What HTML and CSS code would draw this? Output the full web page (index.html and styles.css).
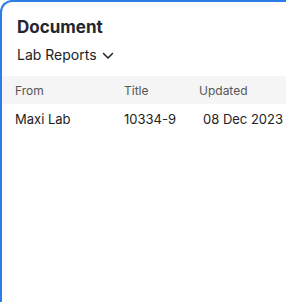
FILE: index.html
```html
<!DOCTYPE html>
<html lang="en">
<head>
    <meta charset="UTF-8">
    <meta name="viewport" content="width=device-width, initial-scale=1.0">
    <title>Document</title>
    <link rel="stylesheet" href="styles.css">
</head>
<body>
    <div class="card">
        <h1 class="title">Document</h1>
        <div class="picker">
            <span>Lab Reports</span>
            <svg class="chevron" width="12" height="8" viewBox="0 0 12 8"><path d="M1.5 1.5 L6 6 L10.5 1.5" fill="none" stroke="#222" stroke-width="1.5" stroke-linecap="round" stroke-linejoin="round"/></svg>
        </div>
        <div class="table">
            <div class="row head">
                <div class="c-from">From</div>
                <div class="c-title">Title</div>
                <div class="c-date">Updated</div>
            </div>
            <div class="row">
                <div class="c-from">Maxi Lab</div>
                <div class="c-title">10334-9</div>
                <div class="c-date date">08 Dec 2023</div>
            </div>
        </div>
    </div>
</body>
</html>
```

FILE: styles.css
```css
body {
    margin: 0;
    font-family: Inter, "Noto Sans", sans-serif;
    background: #fff;
}
.card {
    height: 100vh;
    width: 100%;
    border-top: 2px solid #2b7de9;
    border-left: 2px solid #2b7de9;
    border-top-left-radius: 12px;
    box-sizing: border-box;
}
.title {
    margin: 0;
    padding: 14px 0 0 15px;
    font-size: 17px;
    font-weight: 700;
    color: #23262f;
    line-height: 22px;
}
.picker {
    display: flex;
    align-items: center;
    gap: 5px;
    padding: 8px 0 0 15px;
    font-size: 14px;
    color: #222;
    line-height: 18px;
}
.chevron {
    margin-top: 1px;
}
.table {
    margin-top: 12px;
}
.row {
    display: flex;
    font-size: 13px;
    color: #222;
    height: 29px;
    align-items: center;
}
.row.head {
    background: #f5f5f5;
    font-size: 12px;
    color: #555;
    height: 28px;
}
.c-from {
    width: 109px;
    padding-left: 13px;
}
.c-title {
    width: 75px;
}
.date {
    padding-left: 4px;
}
```
